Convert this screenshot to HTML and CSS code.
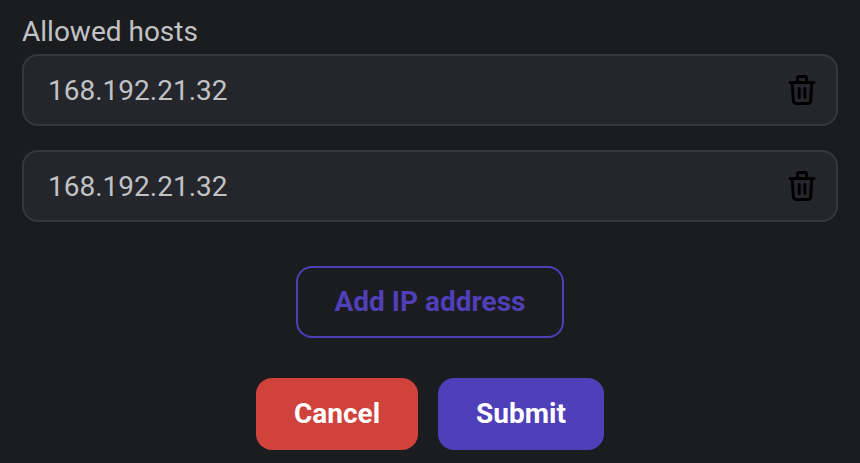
FILE: index.html
```html
<!DOCTYPE html>
<html lang="en">
<head>
<meta charset="utf-8">
<title>Allowed hosts</title>
<link rel="stylesheet" href="styles.css">
</head>
<body>
<form class="hosts">
  <div class="label">Allowed hosts</div>
  <div class="list">
    <div class="field"><span>168.192.21.32</span>
      <svg class="trash" viewBox="0 0 32 36"><path d="M4 10.500h24M11.500 10V6q0-1.500 1.500-1.500h6q1.500 0 1.500 1.500v4M6.300 11l1 17.500q.2 3 3 3h11.400q2.800 0 3-3l1-17.500M13.200 16.500v9M18.800 16.500v9"/></svg>
    </div>
    <div class="field"><span>168.192.21.32</span>
      <svg class="trash" viewBox="0 0 32 36"><path d="M4 10.500h24M11.500 10V6q0-1.500 1.500-1.500h6q1.500 0 1.500 1.500v4M6.300 11l1 17.500q.2 3 3 3h11.400q2.800 0 3-3l1-17.500M13.200 16.500v9M18.800 16.500v9"/></svg>
    </div>
  </div>
  <button type="button" class="btn add">Add IP address</button>
  <div class="actions">
    <button type="button" class="btn cancel">Cancel</button>
    <button type="button" class="btn submit">Submit</button>
  </div>
</form>
</body>
</html>
```
FILE: styles.css
```css
* { box-sizing: border-box; }
body { margin: 0; height: 463px; background: #1b1c1f; color: #c1c2c5; font-family: Roboto, sans-serif; font-size: 28px; overflow: hidden; }
.hosts { display: flex; flex-direction: column; padding: 14px 22px 0; }
.label { height: 40px; line-height: 35px; }
.list { display: flex; flex-direction: column; gap: 24px; }
.field { display: flex; align-items: center; justify-content: space-between; height: 72px; padding: 0 18px 0 24px; background: #25262b; border: 2px solid #37383c; border-radius: 16px; }
.trash { width: 32px; height: 36px; fill: none; stroke: #000; stroke-width: 3; stroke-linecap: round; stroke-linejoin: round; }
.btn { height: 72px; padding: 0 0 2px; border: 0; border-radius: 16px; color: #fff; font: 700 28px Roboto, sans-serif; }
.add { align-self: center; width: 268px; margin-top: 44px; border: 2px solid #4f3fb9; background: transparent; color: #4f3fb9; }
.actions { display: flex; justify-content: center; gap: 20px; margin-top: 40px; }
.cancel { width: 162px; background: #d0423c; }
.submit { width: 166px; background: #4f3fb9; }
```
